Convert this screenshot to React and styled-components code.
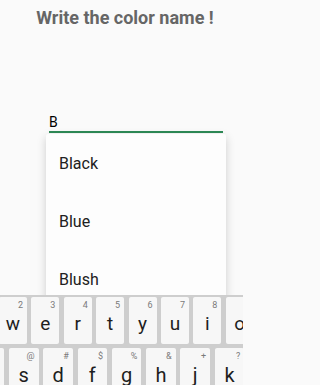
import { useState } from "react";
import styled, { createGlobalStyle } from "styled-components";

const colors = ["Black", "Blue", "Blush"];

// the keyboard is wider than the window: keys at the edges are cut off
const rows = [
  {
    offset: -1,
    keyWidth: 28,
    gap: 4.4,
    size: 19,
    keys: [
      ["w", "2"],
      ["e", "3"],
      ["r", "4"],
      ["t", "5"],
      ["y", "6"],
      ["u", "7"],
      ["i", "8"],
      ["o", "9"],
    ],
  },
  {
    offset: -25.3,
    keyWidth: 29.5,
    gap: 4.8,
    size: 20,
    keys: [
      ["", ""],
      ["s", "@"],
      ["d", "#"],
      ["f", "$"],
      ["g", "%"],
      ["h", "&"],
      ["j", "+"],
      ["k", "?"],
    ],
  },
];

const App = () => {
  const [text, setText] = useState("B");

  return (
    <>
      <GlobalStyle />
      <Screen>
        <Content>
          <Title>Write the color name !</Title>
          <Field>
            <Input value={text} onChange={(e) => setText(e.target.value)} />
            <Menu>
              {colors.map((c) => (
                <Option key={c}>{c}</Option>
              ))}
            </Menu>
          </Field>
        </Content>
        <Keyboard>
          {rows.map((row, i) => (
            <KeyRow key={i} $offset={row.offset} $gap={row.gap}>
              {row.keys.map(([letter, hint], j) => (
                <Key key={j} $width={row.keyWidth}>
                  <Hint>{hint}</Hint>
                  <Letter $size={row.size}>{letter}</Letter>
                </Key>
              ))}
            </KeyRow>
          ))}
        </Keyboard>
      </Screen>
    </>
  );
};
export default App;

const GlobalStyle = createGlobalStyle`
  * {
    box-sizing: border-box;
  }
  html, body {
    overflow: hidden;
  }
  body {
    margin: 0;
    background: #fafafa;
    font-family: Roboto, "Noto Sans", sans-serif;
  }
`;

const Screen = styled.div`
  width: 243px;
  height: 385px;
  display: flex;
  flex-direction: column;
  overflow: hidden;
`;

const Content = styled.div`
  flex: 1;
  display: flex;
  flex-direction: column;
`;

const Title = styled.h1`
  margin: 7px 0 0;
  padding-left: 7px;
  font-size: 18px;
  line-height: 21px;
  font-weight: 700;
  color: #666666;
  text-align: center;
`;

const Field = styled.div`
  position: relative;
  width: 174px;
  margin: 84px 0 0 49px;
`;

const Input = styled.input`
  display: block;
  width: 100%;
  height: 21px;
  padding: 0;
  border: none;
  border-bottom: 2px solid #2e8b57;
  background: transparent;
  font-family: Roboto, sans-serif;
  font-size: 14px;
  color: #000;
  outline: none;
`;

const Menu = styled.ul`
  position: absolute;
  top: 22px;
  left: -3px;
  width: 180px;
  margin: 0;
  padding: 0;
  list-style: none;
  background: #fdfdfd;
  border-radius: 2px;
  box-shadow: 0 3px 10px rgba(0, 0, 0, 0.18);
`;

const Option = styled.li`
  height: 58px;
  display: flex;
  align-items: center;
  padding-left: 13px;
  font-size: 16px;
  color: #212121;
`;

const Keyboard = styled.div`
  position: relative;
  z-index: 2;
  flex-shrink: 0;
  height: 90px;
  padding-top: 2px;
  display: flex;
  flex-direction: column;
  gap: 4px;
  background: #cecece;
  overflow: hidden;
`;

const KeyRow = styled.div`
  display: flex;
  gap: ${(p) => p.$gap}px;
  margin-left: ${(p) => p.$offset}px;
`;

const Key = styled.div`
  flex-shrink: 0;
  width: ${(p) => p.$width}px;
  height: 47px;
  display: flex;
  flex-direction: column;
  align-items: center;
  padding-bottom: 9px;
  background: #f7f7f7;
  border-radius: 2px;
`;

const Hint = styled.span`
  align-self: flex-end;
  min-height: 13px;
  padding: 3px 4px 0 0;
  font-size: 9px;
  line-height: 10px;
  color: #7a7a7a;
`;

const Letter = styled.span`
  margin-top: auto;
  font-size: ${(p) => p.$size}px;
  line-height: 22px;
  color: #1e1e1e;
`;
